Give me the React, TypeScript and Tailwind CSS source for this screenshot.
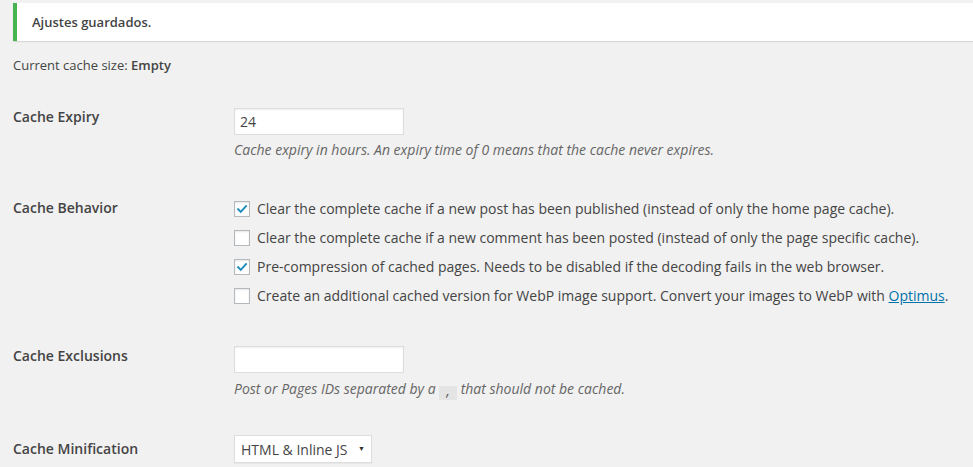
import React from 'react';

const CheckIcon = () => (
  <svg viewBox="0 0 16 16" className="h-[16px] w-[16px]">
    <path d="M3.6 8.2 L6.6 11.3 L12.6 4.6" fill="none" stroke="#1e8cbe" strokeWidth="2.2" strokeLinecap="square" />
  </svg>
);

const Checkbox = ({ checked }: { checked: boolean }) => (
  <span className="box-border flex h-[16px] w-[16px] shrink-0 items-center justify-center border border-[#b4b9be] bg-white shadow-[inset_0_1px_2px_rgba(0,0,0,0.1)]">
    {checked && <CheckIcon />}
  </span>
);

const behaviorOptions = [
  { checked: true, text: 'Clear the complete cache if a new post has been published (instead of only the home page cache).' },
  { checked: false, text: 'Clear the complete cache if a new comment has been posted (instead of only the page specific cache).' },
  { checked: true, text: 'Pre-compression of cached pages. Needs to be disabled if the decoding fails in the web browser.' },
  { checked: false, text: 'Create an additional cached version for WebP image support. Convert your images to WebP with ' },
];

export default function App() {
  return (
    <div className="h-[467px] overflow-hidden bg-[#f1f1f1] pl-[13px] font-['Open_Sans',sans-serif] text-[#444]">
      {/* Notice */}
      <div className="pt-[3px]">
        <div className="flex h-[38px] items-center border-l-4 border-[#46b450] bg-white pl-[15px] pt-[1px] shadow-[0_1px_1px_rgba(0,0,0,0.1)]">
          <span className="text-[13px] font-semibold">Ajustes guardados.</span>
        </div>
      </div>

      <div className="mt-[15px] text-[13px] leading-[18px]">
        Current cache size: <span className="font-semibold">Empty</span>
      </div>

      {/* Cache Expiry */}
      <div className="mt-[34px] flex">
        <div className="w-[221px] shrink-0 text-[14px] font-semibold leading-[18px]">Cache Expiry</div>
        <div>
          <div className="box-border flex h-[27px] w-[170px] items-center border border-[#ddd] bg-white px-[5px] text-[14px] shadow-[inset_0_1px_2px_rgba(0,0,0,0.07)]">
            24
          </div>
          <p className="mt-[6px] text-[14px] italic leading-[18px] text-[#666]">
            Cache expiry in hours. An expiry time of 0 means that the cache never expires.
          </p>
        </div>
      </div>

      {/* Cache Behavior */}
      <div className="mt-[35px] flex">
        <div className="w-[221px] shrink-0 pt-[4px] text-[14px] font-semibold leading-[20px]">Cache Behavior</div>
        <div className="flex flex-col">
          {behaviorOptions.map((opt, i) => (
            <label key={i} className="flex h-[29px] items-center gap-[7px] text-[14px] leading-[29px]">
              <Checkbox checked={opt.checked} />
              <span className="whitespace-nowrap">
                {opt.text}
                {i === 3 && (
                  <>
                    <a className="text-[#0073aa] underline">Optimus</a>.
                  </>
                )}
              </span>
            </label>
          ))}
        </div>
      </div>

      {/* Cache Exclusions */}
      <div className="mt-[36px] flex">
        <div className="w-[221px] shrink-0 text-[14px] font-semibold leading-[20px]">Cache Exclusions</div>
        <div>
          <div className="box-border h-[27px] w-[170px] border border-[#ddd] bg-white shadow-[inset_0_1px_2px_rgba(0,0,0,0.07)]" />
          <p className="mt-[7px] text-[14px] italic leading-[18px] text-[#666]">
            Post or Pages IDs separated by a{' '}
            <code className="inline-block bg-[#e4e4e4] px-[5px] align-[-2px] font-['Liberation_Mono',monospace] text-[13px] not-italic leading-[14px]">
              ,
            </code>{' '}
            that should not be cached.
          </p>
        </div>
      </div>

      {/* Cache Minification */}
      <div className="mt-[35px] flex">
        <div className="w-[221px] shrink-0 pt-[4px] text-[14px] font-semibold leading-[20px]">Cache Minification</div>
        <div className="box-border flex h-[28px] w-[138px] items-center justify-between border border-[#ddd] bg-white pl-[6px] pr-[6px] text-[14px] shadow-[0_1px_1px_rgba(0,0,0,0.04)]">
          <span>HTML &amp; Inline JS</span>
          <span className="text-[7px] text-[#333]">▼</span>
        </div>
      </div>
    </div>
  );
}
